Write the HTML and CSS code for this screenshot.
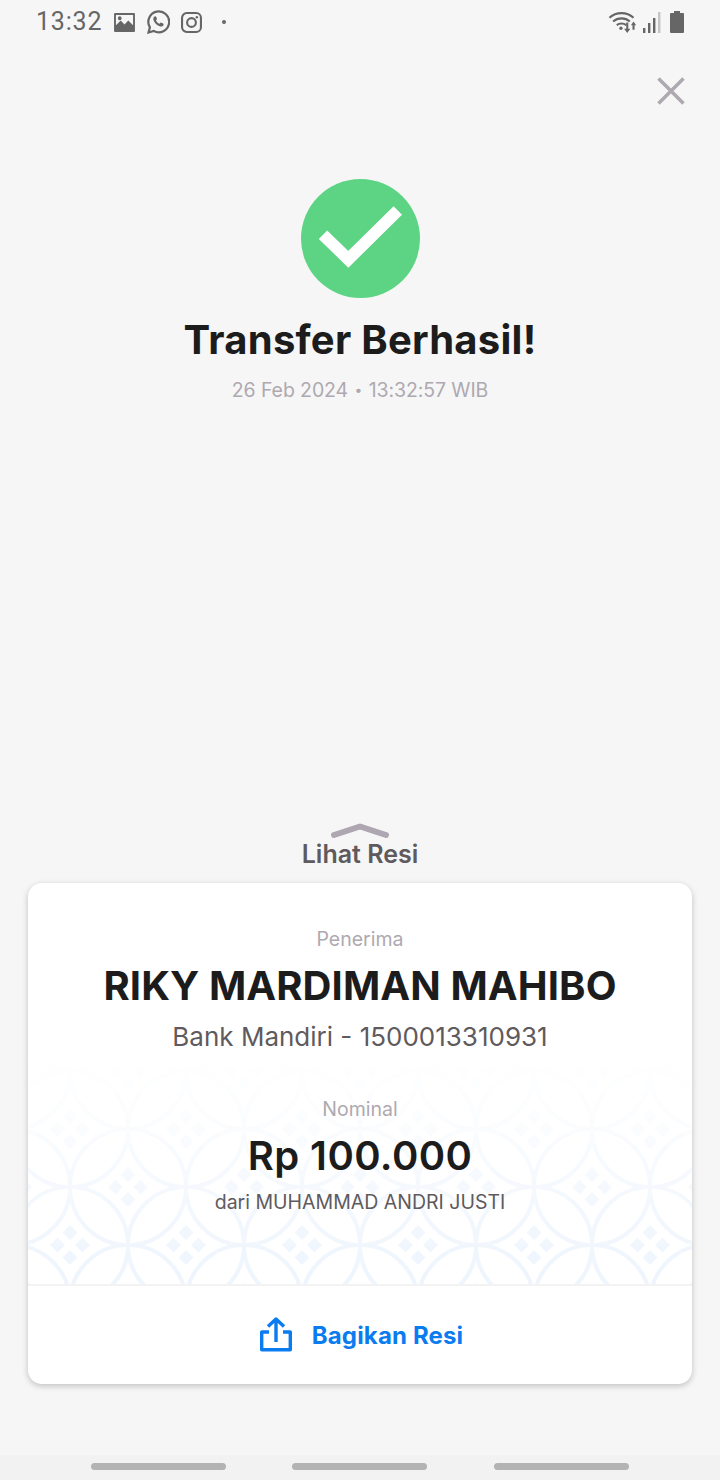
FILE: index.html
```html
<!DOCTYPE html>
<html lang="id">
<head>
<meta charset="utf-8">
<title>Transfer Berhasil</title>
<link rel="stylesheet" href="styles.css">
</head>
<body>
<div class="screen">
  <header class="status">
    <div class="status-left">
      <span class="time">13:32</span>
      <svg class="ic-pic" viewBox="0 0 22 20"><path fill="#666" fill-rule="evenodd" d="M1 0h20a1 1 0 0 1 1 1v18a1 1 0 0 1-1 1H1a1 1 0 0 1-1-1V1a1 1 0 0 1 1-1zm1 2v11l5-5 4 4 4-4 5 5V2zM6 3.500a2 2 0 1 1 0 4 2 2 0 0 1 0-4z"/></svg>
      <svg class="ic-wa" viewBox="0 0 24 24"><path fill="none" stroke="#666" stroke-width="2.200" d="M2.500 22.500l1.400-5.200A10.400 10.400 0 1 1 7.800 21z"/><path fill="#666" d="M8.600 6.600c.5-.5 1.200-.4 1.500.2l.8 1.800c.1.400 0 .8-.3 1.100l-.6.700c.7 1.500 1.900 2.600 3.500 3.400l.8-.9c.3-.3.7-.4 1-.2l1.800.8c.5.300.7.900.4 1.400-.6 1.200-1.900 1.800-3.200 1.500-3.400-.8-6-3.400-6.900-6.700-.3-1.100.1-2.200.9-2.900z"/></svg>
      <svg class="ic-ig" viewBox="0 0 22 22"><rect x="1.100" y="1.100" width="19.800" height="19.800" rx="5" fill="none" stroke="#666" stroke-width="2.200"/><circle cx="11" cy="11" r="4.600" fill="none" stroke="#666" stroke-width="2.200"/><circle cx="16.600" cy="5.400" r="1.300" fill="#666"/></svg>
      <span class="dot"></span>
    </div>
    <div class="status-right">
      <svg class="ic-wifi" viewBox="0 0 26 21"><g fill="none" stroke="#666" stroke-width="2"><path d="M1 6.500C7.500 .5 17.500 .5 24 6.500"/><path d="M4.500 10C9 6 16 6 20.500 10"/><path d="M8 13.500c2.500-2 6.500-2 9 0"/></g><circle cx="12" cy="16.500" r="1.600" fill="#666"/><path fill="#666" d="M17 11h2v6h2l-3 4-3-4h2zM24 10l2.500 3.500H25V18h-2v-4.500h-1.500z"/></svg>
      <svg class="ic-signal" viewBox="0 0 18 21"><rect x="0" y="16" width="2.400" height="5" fill="#666"/><rect x="5" y="11" width="2.400" height="10" fill="#666"/><rect x="10" y="6" width="2.400" height="15" fill="#666"/><rect x="15" y="0" width="2.400" height="21" fill="#c4c4c4"/></svg>
      <svg class="ic-batt" viewBox="0 0 14 22"><path fill="#666" d="M4 0h6v2h3a1 1 0 0 1 1 1v18a1 1 0 0 1-1 1H1a1 1 0 0 1-1-1V3a1 1 0 0 1 1-1h3z"/></svg>
    </div>
  </header>

  <div class="close-row">
    <svg class="ic-close" viewBox="0 0 28 28"><path d="M1.500 1.500l25 25M26.500 1.500l-25 25" fill="none" stroke="#aea9b0" stroke-width="3.500"/></svg>
  </div>

  <section class="hero">
    <svg class="ic-check" viewBox="0 0 119 119"><circle cx="59.500" cy="59.500" r="59.500" fill="#5dd384"/><path d="M22 55.700L47.300 80.300 96.800 31.500" fill="none" stroke="#fff" stroke-width="12"/></svg>
    <h1 class="title">Transfer Berhasil!</h1>
    <p class="stamp">26 Feb 2024 <span class="bullet">•</span> 13:32:57 WIB</p>
  </section>

  <div class="peek">
    <svg class="ic-chev" viewBox="0 0 60 16"><path d="M4 12L30 3.500l26 8.500" fill="none" stroke="#aea6b0" stroke-width="6" stroke-linecap="round" stroke-linejoin="round"/></svg>
    <span class="peek-label">Lihat Resi</span>
  </div>

  <main class="card">
    <div class="card-body">
      <svg class="batik" width="664" height="230" aria-hidden="true">
        <defs>
          <linearGradient id="fade" x1="0" y1="0" x2="0" y2="1">
            <stop offset="0" stop-color="#000"/>
            <stop offset=".3" stop-color="#444"/>
            <stop offset=".7" stop-color="#bbb"/>
            <stop offset="1" stop-color="#fff"/>
          </linearGradient>
          <mask id="fadeMask"><rect width="664" height="230" fill="url(#fade)"/></mask>
          <g id="petals">
            <path d="M0-20l7.500 7.500L0-5l-7.500-7.500zM0 5l7.500 7.500L0 20l-7.500-7.500zM-12.500-7.500L-5 0l-7.500 7.500L-20 0zM12.500-7.500L20 0l-7.500 7.500L5 0z"/>
          </g>
          <pattern id="kawung" width="116" height="116" patternUnits="userSpaceOnUse" x="42" y="-41">
            <g fill="none" stroke="#eef5fd" stroke-width="4">
              <circle cx="0" cy="0" r="58"/><circle cx="116" cy="0" r="58"/><circle cx="0" cy="116" r="58"/><circle cx="116" cy="116" r="58"/><circle cx="58" cy="58" r="58"/>
            </g>
            <g fill="#eef5fd">
              <use href="#petals" x="58" y="58"/>
              <use href="#petals" x="0" y="0"/>
              <use href="#petals" x="116" y="0"/>
              <use href="#petals" x="0" y="116"/>
              <use href="#petals" x="116" y="116"/>
            </g>
          </pattern>
        </defs>
        <rect width="664" height="230" fill="url(#kawung)" mask="url(#fadeMask)"/>
      </svg>
      <div class="info">
        <p class="label">Penerima</p>
        <p class="name">RIKY MARDIMAN MAHIBO</p>
        <p class="bank">Bank Mandiri - 1500013310931</p>
        <p class="label nominal">Nominal</p>
        <p class="amount">Rp 100.000</p>
        <p class="from">dari MUHAMMAD ANDRI JUSTI</p>
      </div>
    </div>
    <footer class="share">
      <svg class="ic-share" viewBox="0 0 32 36"><path d="M9 15H1.700v17.800h28.600V15H23M16 25V3M8 9.500l8-7.500 8 7.500" fill="none" stroke="#0a7cf0" stroke-width="3.400" stroke-linejoin="round"/></svg>
      <span class="share-label">Bagikan Resi</span>
    </footer>
  </main>

  <nav class="navbar">
    <span class="pill"></span><span class="pill"></span><span class="pill"></span>
  </nav>
</div>
</body>
</html>
```

FILE: styles.css
```css
* { box-sizing: border-box; }
html, body { margin: 0; padding: 0; }
body { background: #f6f6f6; font-family: Inter, "Noto Sans", sans-serif; }
p, h1 { margin: 0; }

.screen {
  width: 720px;
  height: 1480px;
  display: flex;
  flex-direction: column;
  overflow: hidden;
}

.status {
  height: 44px;
  padding: 0 36px 0 36px;
  display: flex;
  align-items: center;
  justify-content: space-between;
  flex: none;
}
.status-left, .status-right { display: flex; align-items: center; }
.time {
  font-family: Roboto, sans-serif;
  font-size: 25px;
  color: #666;
  letter-spacing: .8px;
  line-height: 44px;
}
.ic-pic { width: 21px; height: 19px; margin-left: 12px; }
.ic-wa { width: 24px; height: 24px; margin-left: 11px; }
.ic-ig { width: 21px; height: 21px; margin-left: 11px; }
.dot { width: 4px; height: 4px; border-radius: 50%; background: #666; margin-left: 20px; }
.ic-wifi { width: 28px; height: 22px; }
.ic-signal { width: 18px; height: 21px; margin-left: 7px; }
.ic-batt { width: 14px; height: 22px; margin-left: 9px; }

.close-row {
  height: 62px;
  padding: 33px 35px 0 0;
  display: flex;
  justify-content: flex-end;
  flex: none;
}
.ic-close { width: 28px; height: 28px; }

.hero {
  display: flex;
  flex-direction: column;
  align-items: center;
  flex: 1;
  padding-top: 73px;
}
.ic-check { width: 119px; height: 119px; display: block; }
.title {
  margin-top: 19px;
  font-size: 40px;
  line-height: 46px;
  font-weight: 700;
  letter-spacing: .25px;
  color: #1c1c1c;
}
.stamp {
  margin-top: 14px;
  font-size: 19.500px;
  line-height: 26px;
  letter-spacing: -.1px;
  color: #aea9b0;
}
.bullet { font-size: 14px; margin: 0 1px; vertical-align: 2px; }

.peek {
  display: flex;
  flex-direction: column;
  align-items: center;
  flex: none;
  padding-bottom: 14px;
}
.ic-chev { width: 60px; height: 16px; display: block; }
.peek-label {
  font-size: 25px;
  line-height: 30px;
  font-weight: 600;
  color: #5f5a5d;
}

.card {
  margin: 0 28px;
  height: 501px;
  flex: none;
  background: #fff;
  border-radius: 14px;
  box-shadow: 0 2px 6px rgba(0,0,0,.22);
  display: flex;
  flex-direction: column;
  overflow: hidden;
}
.card-body {
  position: relative;
  height: 403px;
  flex: none;
  border-bottom: 2px solid #f3f3f3;
}
.batik { position: absolute; left: 0; bottom: 0; display: block; }
.info {
  position: relative;
  display: flex;
  flex-direction: column;
  align-items: center;
  padding-top: 43px;
}
.label { font-size: 19.500px; line-height: 26px; color: #aea9b0; }
.name {
  margin-top: 11px;
  font-size: 40px;
  line-height: 46px;
  font-weight: 700;
  letter-spacing: .1px;
  color: #1c1c1c;
}
.bank { margin-top: 11px; font-size: 26px; line-height: 34px; color: #5f5a5d; }
.nominal { margin-top: 42px; }
.amount {
  margin-top: 11px;
  font-size: 40px;
  line-height: 46px;
  font-weight: 600;
  letter-spacing: .4px;
  color: #1c1c1c;
}
.from { margin-top: 10px; font-size: 19.500px; line-height: 26px; color: #5f5a5d; }

.share {
  flex: 1;
  display: flex;
  align-items: center;
  justify-content: center;
  gap: 20px;
  padding-left: 3px;
}
.ic-share { width: 32px; height: 36px; }
.share-label { font-size: 24px; font-weight: 700; letter-spacing: .15px; color: #0a7cf0; }

.navbar {
  margin-top: 71px;
  height: 25px;
  flex: none;
  background: #f2f2f2;
  display: flex;
  justify-content: center;
  align-items: flex-start;
  gap: 66.500px;
  padding: 8px 1px 0 0;
}
.pill { width: 135px; height: 7px; border-radius: 4px; background: #b3b3b3; }
```
